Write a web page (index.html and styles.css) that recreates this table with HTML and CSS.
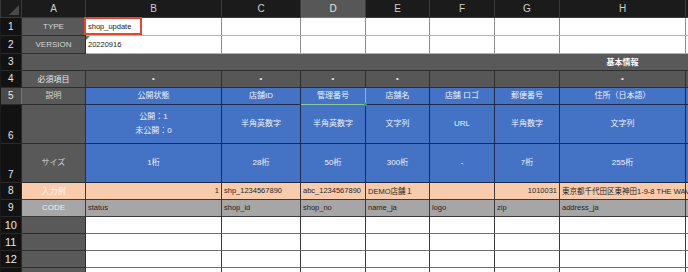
FILE: index.html
```html
<!DOCTYPE html>
<html lang="ja">
<head>
    <meta charset="UTF-8">
    <title>shop_update</title>
    <link rel="stylesheet" href="styles.css">
</head>
<body>
    <table class="sheet">
        <colgroup>
            <col class="w-head"><col class="w-a"><col class="w-b"><col class="w-c"><col class="w-d">
            <col class="w-e"><col class="w-f"><col class="w-g"><col class="w-h"><col class="w-i">
        </colgroup>
        <tr class="cols">
            <th class="corner"><span class="corner-mark"></span></th>
            <th>A</th><th>B</th><th>C</th><th class="active">D</th><th>E</th><th>F</th><th>G</th><th>H</th><th></th>
        </tr>
        <tr class="plain">
            <th class="num">1</th>
            <td class="label">TYPE</td>
            <td class="mark">shop_update<span class="callout"></span></td>
            <td></td><td></td><td></td><td></td><td></td><td></td><td></td>
        </tr>
        <tr class="plain">
            <th class="num">2</th>
            <td class="label">VERSION</td>
            <td class="flag">20220916</td>
            <td></td><td></td><td></td><td></td><td></td><td></td><td></td>
        </tr>
        <tr class="band">
            <th class="num">3</th>
            <td></td><td></td><td></td><td></td><td></td><td></td><td></td>
            <td class="title">基本情報</td><td></td>
        </tr>
        <tr class="required">
            <th class="num">4</th>
            <td class="label">必須項目</td>
            <td>•</td><td>•</td><td>•</td><td>•</td><td></td><td></td><td>•</td><td></td>
        </tr>
        <tr class="blue">
            <th class="num active">5</th>
            <td class="label">説明</td>
            <td>公開状態</td><td>店舗ID</td><td class="selected">管理番号<span class="handle"></span></td><td>店舗名</td>
            <td>店舗 ロゴ</td><td>郵便番号</td><td>住所（日本語）</td><td></td>
        </tr>
        <tr class="blue tall">
            <th class="num">6</th>
            <td class="label"></td>
            <td>公開：1<br>未公開：0</td><td>半角英数字</td><td>半角英数字</td><td>文字列</td>
            <td>URL</td><td>半角数字</td><td>文字列</td><td></td>
        </tr>
        <tr class="blue tall">
            <th class="num">7</th>
            <td class="label">サイズ</td>
            <td>1桁</td><td>28桁</td><td>50桁</td><td>300桁</td>
            <td>-</td><td>7桁</td><td>255桁</td><td></td>
        </tr>
        <tr class="sample">
            <th class="num">8</th>
            <td class="label">入力例</td>
            <td class="right">1</td><td>shp_1234567890</td><td>abc_1234567890</td><td>DEMO店舗１</td>
            <td></td><td class="right">1010031</td><td>東京都千代田区東神田1-9-8 THE WAVE</td><td></td>
        </tr>
        <tr class="code">
            <th class="num">9</th>
            <td class="label">CODE</td>
            <td>status</td><td>shop_id</td><td>shop_no</td><td>name_ja</td>
            <td>logo</td><td>zip</td><td>address_ja</td><td>b</td>
        </tr>
        <tr class="empty">
            <th class="num">10</th>
            <td class="label"></td><td></td><td></td><td></td><td></td><td></td><td></td><td></td><td></td>
        </tr>
        <tr class="empty">
            <th class="num">11</th>
            <td class="label"></td><td></td><td></td><td></td><td></td><td></td><td></td><td></td><td></td>
        </tr>
        <tr class="empty">
            <th class="num">12</th>
            <td class="label"></td><td></td><td></td><td></td><td></td><td></td><td></td><td></td><td></td>
        </tr>
        <tr class="empty last">
            <th class="num"></th>
            <td class="label"></td><td></td><td></td><td></td><td></td><td></td><td></td><td></td><td></td>
        </tr>
    </table>
</body>
</html>
```

FILE: styles.css
```css
body {
    margin: 0;
    background: #1b1b1b;
    overflow: hidden;
    font-family: 'Liberation Sans', 'Noto Sans CJK JP', sans-serif;
}

.sheet {
    table-layout: fixed;
    border-collapse: collapse;
    width: 720px;
    font-size: 8px;
}

.w-head { width: 21px; }
.w-a { width: 64px; }
.w-b { width: 136px; }
.w-c { width: 79px; }
.w-d { width: 65px; }
.w-e { width: 64px; }
.w-f { width: 65px; }
.w-g { width: 65px; }
.w-h { width: 126px; }
.w-i { width: 35px; }

td, th {
    padding: 0 2px;
    white-space: nowrap;
    overflow: visible;
    font-weight: normal;
    border: 1px solid #2e2e2e;
}

tr { height: 17px; }
tr.plain { height: 18px; }
tr.tall { height: 39px; }

/* column letters */
.cols th {
    background: #1b1b1b;
    color: #cfcfcf;
    font-size: 10px;
    text-align: center;
    border-color: #3a3a3a;
    border-top: none;
}

.cols th.active {
    background: #575757;
    color: #e6e6e6;
    border-bottom: 1px solid #3f9a5a;
}

.cols .corner {
    position: relative;
}

.corner-mark {
    position: absolute;
    right: 2px;
    bottom: 2px;
    border-style: solid;
    border-width: 0 0 10px 10px;
    border-color: transparent transparent #4a4a4a transparent;
}

/* row numbers */
th.num {
    background: #121212;
    color: #e8e8e8;
    font-size: 10px;
    text-align: center;
    padding: 0;
    border-color: #2a2a2a;
    border-left: none;
}

th.num.active {
    background: #4a4a4a;
    border-right: 1px solid #3f9a5a;
}

.tall th.num {
    vertical-align: bottom;
    padding-bottom: 2px;
}

td.label {
    background: #595959;
    color: #d6d6d6;
    text-align: center;
    border-color: #2e2e2e;
}

/* rows 1-2 */
.plain td {
    background: #ffffff;
    color: #1a1a1a;
    font-size: 7.5px;
    border-top-color: #b3b3b3;
    border-bottom-color: #b3b3b3;
    border-left-color: #8c8c8c;
    border-right-color: #8c8c8c;
}

.plain td.label {
    background: #595959;
    color: #d6d6d6;
    font-size: 8px;
    border-color: #2e2e2e;
}

.mark {
    position: relative;
}

.callout {
    position: absolute;
    left: -2px;
    top: -1px;
    width: 54px;
    height: 14px;
    border: 2px solid #e5452d;
}

.flag {
    position: relative;
}

.flag::before {
    content: "";
    position: absolute;
    left: 0;
    top: 0;
    border-style: solid;
    border-width: 4px 4px 0 0;
    border-color: #2f8f4e transparent transparent transparent;
}

/* row 3 */
.band td {
    background: #595959;
    border-left: none;
    border-right: none;
}

.band td.title {
    color: #ffffff;
    font-weight: bold;
    text-align: center;
}

/* row 4 */
.required td {
    background: #575757;
    color: #e8e8e8;
    text-align: center;
    border-color: #2e2e2e;
}

.required td.label {
    background: #595959;
}

/* rows 5-7 */
.blue td {
    background: #4472c4;
    color: #eef2fb;
    text-align: center;
    border-color: #1f2b47;
    line-height: 14px;
}

.blue td.label {
    background: #595959;
    color: #d6d6d6;
    border-color: #2e2e2e;
}

.blue td.selected {
    position: relative;
    border: 1px solid #8cc79a;
}

.handle {
    position: absolute;
    right: -2px;
    bottom: -2px;
    width: 3px;
    height: 3px;
    background: #3f9a5a;
}

/* row 8 */
.sample td {
    background: #f8cbad;
    color: #262626;
    font-size: 7.5px;
    border-color: #3a3a3a;
}

.sample td.label {
    background: #f8cbad;
    color: #fff4ec;
    font-size: 8px;
}

.sample td.right {
    text-align: right;
}

/* row 9 */
.code td {
    background: #a6a6a6;
    color: #1f1f1f;
    font-size: 7.5px;
    border-color: #3a3a3a;
}

.code td.label {
    color: #eeeeee;
    font-size: 8px;
}

/* rows 10+ */
.empty td {
    background: #ffffff;
    border-top-color: #6e6e6e;
    border-bottom-color: #6e6e6e;
    border-left-color: #3a3a3a;
    border-right-color: #3a3a3a;
}

.empty td.label {
    background: #595959;
    border-color: #2e2e2e;
}

.empty th.num {
    font-size: 11px;
}
```
